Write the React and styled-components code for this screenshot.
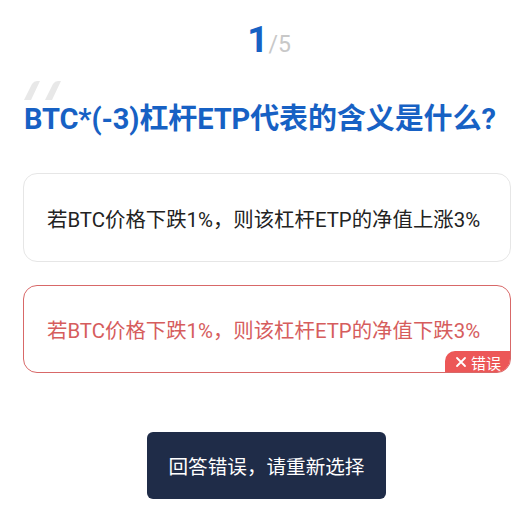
import React from "react";
import styled, { createGlobalStyle } from "styled-components";

const Global = createGlobalStyle`
  html, body { margin: 0; padding: 0; background: #ffffff; }
  body { font-family: Roboto, "Noto Sans CJK SC", sans-serif; }
  * { box-sizing: border-box; }
`;

const Page = styled.div`
  position: relative;
  width: 528px;
  height: 510px;
  padding: 0 17px 0 23px;
  display: flex;
  flex-direction: column;
  background: #fff;
  overflow: hidden;
`;

const Counter = styled.div`
  margin-top: 20px;
  height: 40px;
  display: flex;
  justify-content: center;
  align-items: baseline;
  padding-left: 4px;
`;

const Current = styled.span`
  font-size: 37px;
  font-weight: 700;
  color: #1761c4;
  line-height: 40px;
`;

const Total = styled.span`
  font-size: 23px;
  color: #c8c8c8;
  line-height: 40px;
`;

const TitleWrap = styled.div`
  position: relative;
  margin-top: 36px;
  height: 40px;
  display: flex;
  align-items: center;
`;

const QuoteMark = styled.svg`
  position: absolute;
  left: 0px;
  top: -16px;
  z-index: 0;
`;

const Title = styled.h1`
  position: relative;
  z-index: 1;
  margin: 0 0 0 1px;
  font-size: 29px;
  font-weight: 700;
  color: #1761c4;
  letter-spacing: -0.1px;
  white-space: nowrap;
`;

const Options = styled.div`
  margin-top: 37px;
  display: flex;
  flex-direction: column;
  gap: 23px;
`;

const Option = styled.div`
  position: relative;
  height: ${(p) => (p.$wrong ? "88px" : "89px")};
  border: ${(p) => (p.$wrong ? "1.5px solid #d86868" : "1.5px solid #e6e6e6")};
  border-radius: 14px;
  background: #fff;
  display: flex;
  align-items: center;
  padding-left: 23px;
  font-size: 20.4px;
  color: ${(p) => (p.$wrong ? "#d65d5d" : "#222222")};
  white-space: nowrap;
  overflow: hidden;
`;

const Badge = styled.div`
  position: absolute;
  right: -1px;
  bottom: -1px;
  height: 22px;
  padding: 0 10px 0 10px;
  background: #ec5757;
  color: #fff;
  font-size: 15px;
  border-top-left-radius: 10px;
  display: flex;
  align-items: center;
  gap: 4px;
`;

const Toast = styled.div`
  position: absolute;
  left: 147px;
  top: 432px;
  width: 239px;
  height: 67px;
  background: #1f2c48;
  border-radius: 6px;
  color: #fff;
  font-size: 19.6px;
  display: flex;
  align-items: center;
  justify-content: center;
`;

export default function App() {
  return (
    <>
      <Global />
      <Page>
        <Counter>
          <Current>1</Current>
          <Total>/5</Total>
        </Counter>
        <TitleWrap>
          <QuoteMark width="44" height="22" viewBox="0 0 44 22">
            <path d="M1 20 L9 4 Q11 1 14 1 L17 1 L8 20 Z" fill="#e8e8e8" />
            <path d="M22 20 L30 4 Q32 1 35 1 L38 1 L29 20 Z" fill="#e8e8e8" />
          </QuoteMark>
          <Title>BTC*(-3)杠杆ETP代表的含义是什么?</Title>
        </TitleWrap>
        <Options>
          <Option>若BTC价格下跌1%，则该杠杆ETP的净值上涨3%</Option>
          <Option $wrong>
            若BTC价格下跌1%，则该杠杆ETP的净值下跌3%
            <Badge>
              <svg width="12" height="12" viewBox="0 0 12 12">
                <path d="M2 2 L10 10 M10 2 L2 10" stroke="#fff" strokeWidth="1.8" strokeLinecap="round" />
              </svg>
              错误
            </Badge>
          </Option>
        </Options>
        <Toast>回答错误，请重新选择</Toast>
      </Page>
    </>
  );
}
